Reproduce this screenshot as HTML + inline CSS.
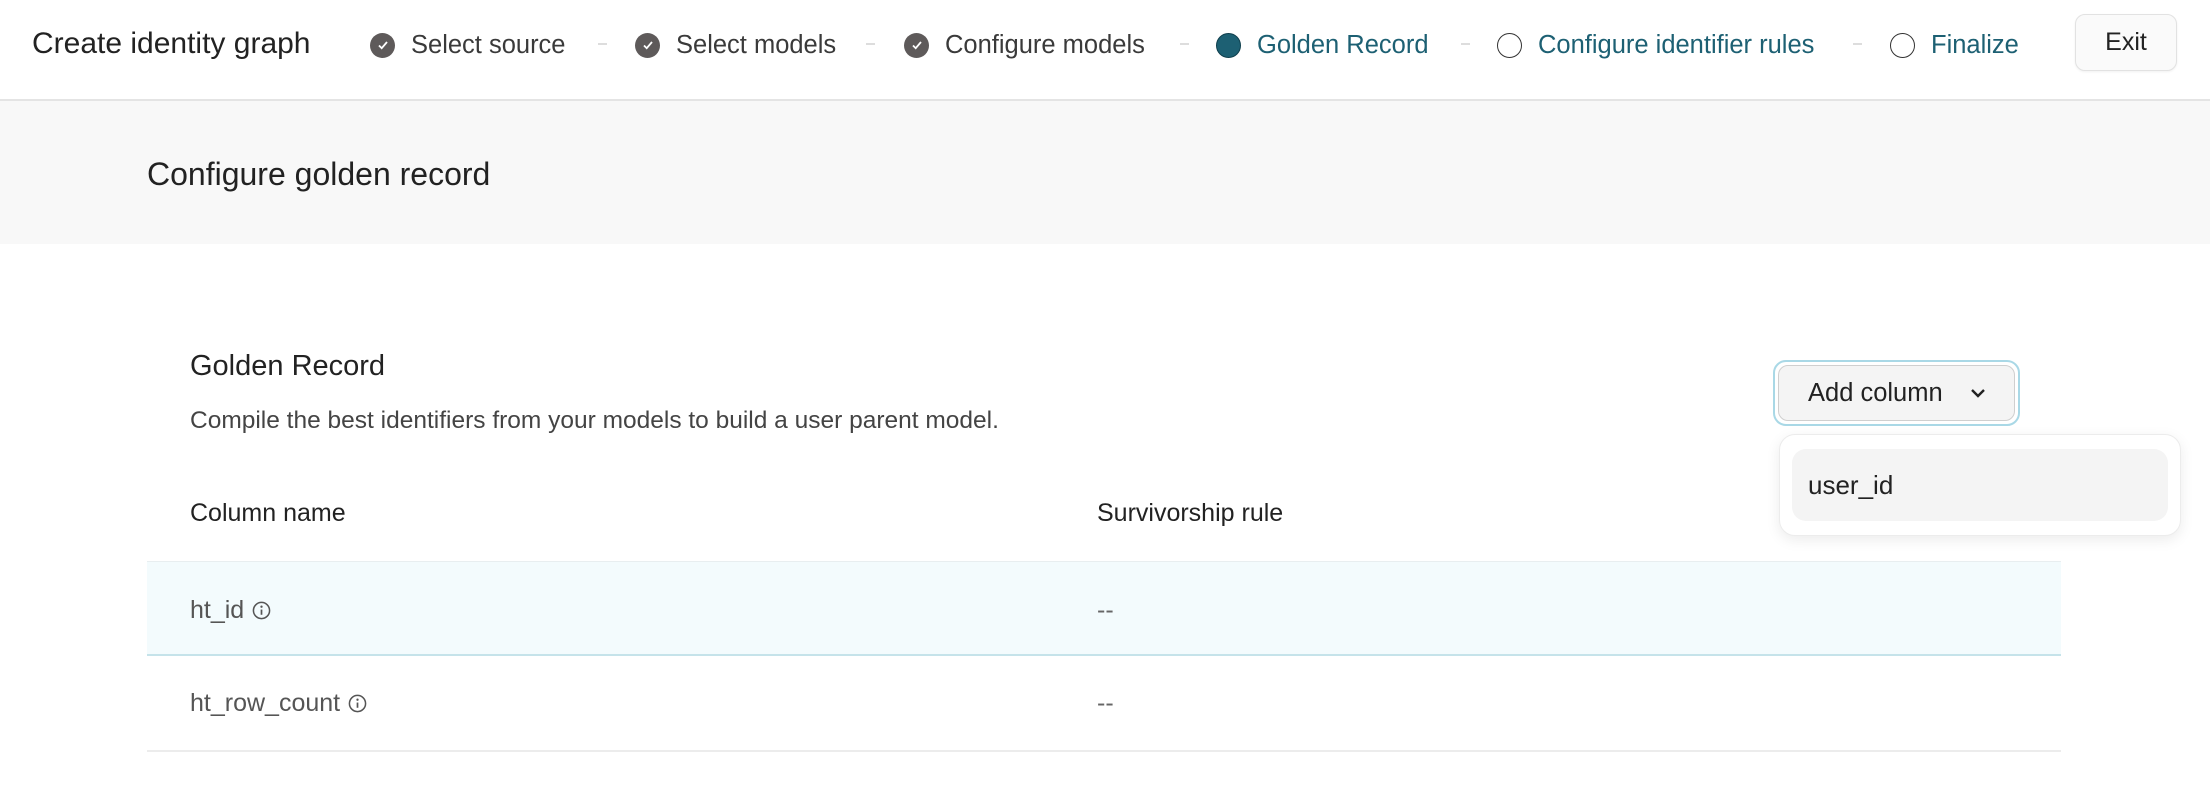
<!DOCTYPE html>
<html><head><meta charset="utf-8"><style>
*{box-sizing:border-box;margin:0;padding:0}
body{width:2210px;height:808px;background:#fff;font-family:"Liberation Sans",sans-serif;color:#2b2b2b;position:relative;overflow:hidden}
.a{position:absolute;white-space:nowrap}
.hdr{position:absolute;left:0;top:0;width:2210px;height:101px;border-bottom:2px solid #e4e4e4;background:#fff}
.band{position:absolute;left:0;top:101px;width:2210px;height:143px;background:#f8f8f8}
.step{position:absolute;top:31px;font-size:25.5px;line-height:28px;display:flex;align-items:center;color:#3a3a3a}
.step .ic{width:25px;height:25px;border-radius:50%;margin-right:16px;flex:none;display:flex;align-items:center;justify-content:center}
.done .ic{background:#5e5a5a}
.cur{color:#1d6073}.cur .ic{background:#1d6073;border:1.5px solid #0f3f4d}
.todo{color:#1d6073}.todo .ic{border:1.5px solid #333;background:#fff}
.dash{position:absolute;top:43px;width:9px;height:2px;background:#ddd}
</style></head><body>
<div class="hdr"></div>
<div class="a" style="left:32px;top:27px;font-size:30px;color:#222">Create identity graph</div>
<div class="step done" style="left:370px"><span class="ic"><svg width="14" height="14" viewBox="0 0 14 14"><path d="M3 7.5l2.7 2.7L11 4" stroke="#fff" stroke-width="1.8" fill="none"/></svg></span>Select source</div>
<div class="dash" style="left:598px"></div>
<div class="step done" style="left:635px"><span class="ic"><svg width="14" height="14" viewBox="0 0 14 14"><path d="M3 7.5l2.7 2.7L11 4" stroke="#fff" stroke-width="1.8" fill="none"/></svg></span>Select models</div>
<div class="dash" style="left:866px"></div>
<div class="step done" style="left:904px"><span class="ic"><svg width="14" height="14" viewBox="0 0 14 14"><path d="M3 7.5l2.7 2.7L11 4" stroke="#fff" stroke-width="1.8" fill="none"/></svg></span>Configure models</div>
<div class="dash" style="left:1180px"></div>
<div class="step cur" style="left:1216px"><span class="ic"></span>Golden Record</div>
<div class="dash" style="left:1461px"></div>
<div class="step todo" style="left:1497px"><span class="ic"></span>Configure identifier rules</div>
<div class="dash" style="left:1853px"></div>
<div class="step todo" style="left:1890px"><span class="ic"></span>Finalize</div>
<div class="a" style="left:2075px;top:14px;width:102px;height:57px;border:1.5px solid #e2e2e2;border-radius:10px;background:#fafafa;font-size:25px;display:flex;align-items:center;justify-content:center;color:#222;box-shadow:0 1px 2px rgba(0,0,0,.06)">Exit</div>
<div class="band"></div>
<div class="a" style="left:147px;top:156px;font-size:32px;color:#222">Configure golden record</div>
<div class="a" style="left:190px;top:350px;font-size:29px;color:#222">Golden Record</div>
<div class="a" style="left:190px;top:407px;font-size:24.5px;color:#444">Compile the best identifiers from your models to build a user parent model.</div>
<div class="a" style="left:147px;top:561px;width:1914px;height:95px;background:#f3fbfd;border-top:1.5px solid #e8eef0;border-bottom:2px solid #c5e3ea"></div>
<div class="a" style="left:147px;top:750px;width:1914px;height:1.5px;background:#ececec"></div>
<div class="a" style="left:190px;top:499px;font-size:25px;color:#222">Column name</div>
<div class="a" style="left:1097px;top:499px;font-size:25px;color:#222">Survivorship rule</div>
<div class="a" style="left:190px;top:596px;font-size:25px;color:#555;display:flex;align-items:center">ht_id<svg style="margin-left:8px" width="19" height="19" viewBox="0 0 20 20"><circle cx="10" cy="10" r="8.5" stroke="#555" stroke-width="1.6" fill="none"/><path d="M10 9v5.5" stroke="#555" stroke-width="1.8"/><circle cx="10" cy="6" r="1.2" fill="#555"/></svg></div>
<div class="a" style="left:1097px;top:596px;font-size:25px;color:#666">--</div>
<div class="a" style="left:190px;top:689px;font-size:25px;color:#555;display:flex;align-items:center">ht_row_count<svg style="margin-left:8px" width="19" height="19" viewBox="0 0 20 20"><circle cx="10" cy="10" r="8.5" stroke="#555" stroke-width="1.6" fill="none"/><path d="M10 9v5.5" stroke="#555" stroke-width="1.8"/><circle cx="10" cy="6" r="1.2" fill="#555"/></svg></div>
<div class="a" style="left:1097px;top:689px;font-size:25px;color:#666">--</div>
<div class="a" style="left:1773px;top:360px;width:247px;height:66px;border:2px solid #a9d8e6;border-radius:13px"></div>
<div class="a" style="left:1778px;top:365px;width:237px;height:56px;border:1.5px solid #cfcfcf;border-radius:10px;background:#f4f4f4;font-size:25.5px;display:flex;align-items:center;padding-left:29px;color:#222">Add column<svg style="margin-left:26px" width="18" height="12" viewBox="0 0 18 12"><path d="M3 3l6 6 6-6" stroke="#222" stroke-width="2.4" fill="none"/></svg></div>
<div class="a" style="left:1779px;top:434px;width:402px;height:102px;background:#fff;border:1.5px solid #ececec;border-radius:16px;box-shadow:0 4px 14px rgba(0,0,0,.08)"></div>
<div class="a" style="left:1792px;top:449px;width:376px;height:72px;background:#f4f4f4;border-radius:14px;font-size:26px;display:flex;align-items:center;padding-left:16px;color:#222">user_id</div>
</body></html>
